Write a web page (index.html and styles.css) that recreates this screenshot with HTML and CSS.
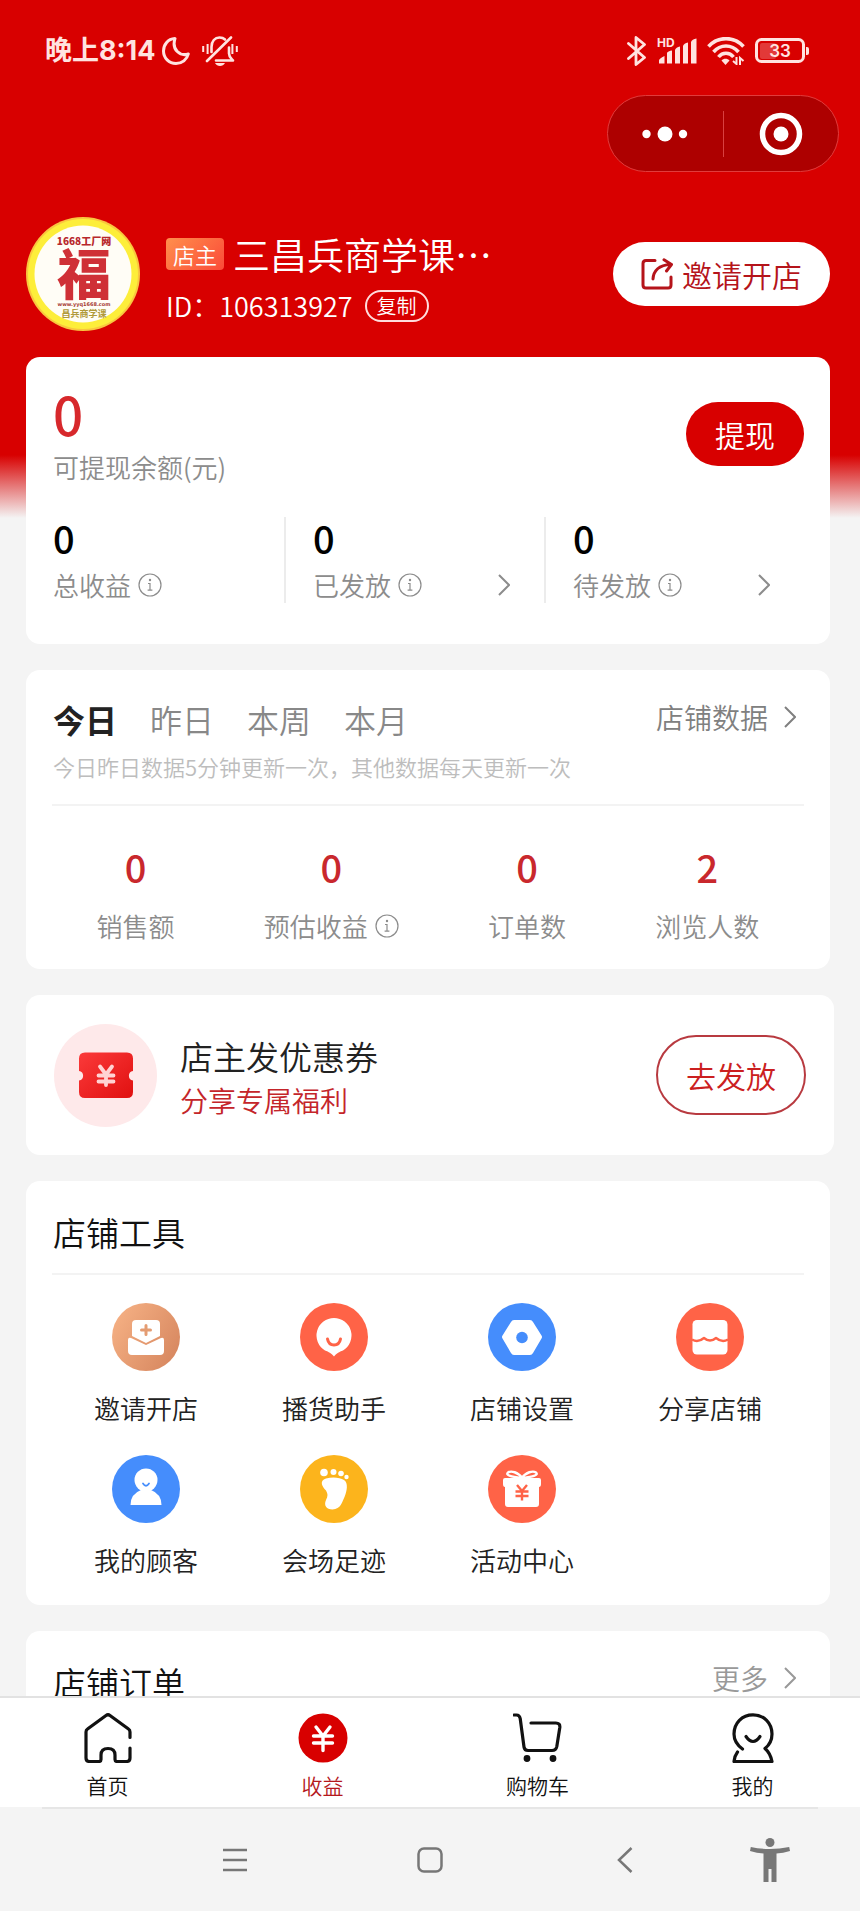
FILE: index.html
```
<!DOCTYPE html>
<html lang="zh-CN">
<head>
  <meta charset="UTF-8">
  <meta name="viewport" content="width=device-width, initial-scale=1.0">
  <title>收益</title>
  <link rel="stylesheet" href="styles.css">
</head>
<body>

  <!-- shared icons -->
  <svg class="sprite" aria-hidden="true">
    <symbol id="info" viewBox="0 0 24 24">
      <circle cx="12" cy="12" r="11" fill="none" stroke="currentColor" stroke-width="1.2"/>
      <circle cx="12" cy="7" r="1.2" fill="currentColor"/>
      <path d="M10 10.500h2v6.500M9.600 17.200h4.800" fill="none" stroke="currentColor" stroke-width="1.2"/>
    </symbol>
    <symbol id="arrow" viewBox="0 0 12 22">
      <path d="M1 1l10 10L1 21" fill="none" stroke="currentColor" stroke-width="2"/>
    </symbol>
  </svg>

  <div class="screen">
    <main class="content">

      <div class="statusbar">
        <span class="time">晚上8:14</span>
        <svg class="moon" width="28" height="28" viewBox="0 0 28 28"><path d="M13 1.6C5.500 2 1.500 8 1.500 14c0 7 5.500 12.500 12.500 12.500 6 0 11-4 12.300-9.500-8 2.500-17-4-13.300-15.400z" fill="none" stroke="currentColor" stroke-width="3" stroke-linejoin="round"/></svg>
        <svg class="bell" width="36" height="30" viewBox="0 0 36 30">
          <g fill="none" stroke="currentColor" stroke-width="2.600" stroke-linecap="round" stroke-linejoin="round">
            <path d="M5 25L29 1.500"/>
            <path d="M9.500 16v-5c0-6 3.500-9.500 8-9.500 2 0 4 .5 5.500 2"/>
            <path d="M14 24.500h17c-2.500-2.500-4-3.500-4-7v-6"/>
          </g>
          <path d="M13 27h10c-1 2-3 3-5 3s-4-1-5-3z" fill="currentColor"/>
          <path d="M1.200 10v6M5.600 8v10M30.400 8v10M34.800 10v6" stroke="currentColor" stroke-width="2"/>
        </svg>
        <div class="status-right">
          <svg width="20" height="30" viewBox="0 0 20 30"><path d="M1.500 7.500l16 14-8.500 7V1.500l8.500 7-16 14" fill="none" stroke="currentColor" stroke-width="2.800" stroke-linejoin="round" stroke-linecap="round"/></svg>
          <svg width="40" height="34" viewBox="0 -3 40 34">
            <text x="0" y="10" class="hd">HD</text>
            <path d="M2 26.500v-3q0-2 5.500-4.500v7.500zM10 26.500V16q1-2 5-2.500v13zM18 26.500V13q1-3 5-3.500v17zM26 26.500V9q1-3 5-3.500v21zM34 26.500V5q1-3 5.500-3.500v25z" fill="currentColor"/>
          </svg>
          <svg width="38" height="28" viewBox="0 0 38 28">
            <g fill="none" stroke="currentColor" stroke-width="3.600">
              <path d="M1.500 9.500C11-1 27-1 36.500 9.500"/>
              <path d="M6.500 15C13.500 7 24.500 7 31.500 15"/>
              <path d="M11.500 20c4-5 11-5 15 0"/>
            </g>
            <path d="M14.500 23.500c2-2.500 6-2.500 8 0L18.500 28z" fill="currentColor"/>
            <path d="M29.500 20v7l-3.500-3M33 28v-7l3.500 3" fill="none" stroke="currentColor" stroke-width="2"/>
          </svg>
          <svg width="55" height="26" viewBox="0 0 55 26">
            <rect x="5" y="5" width="16" height="16" rx="2" fill="currentColor" opacity=".25"/>
            <rect x="1.500" y="1.500" width="47" height="22" rx="5" fill="none" stroke="currentColor" stroke-width="3"/>
            <path d="M51 9h1q2 0 2 2v4q0 2-2 2h-1z" fill="currentColor"/>
            <text x="25" y="19" text-anchor="middle" class="battery">33</text>
          </svg>
        </div>
      </div>

      <div class="capsule">
        <button class="capsule-btn" aria-label="更多">
          <svg width="46" height="16" viewBox="0 0 46 16" fill="currentColor"><circle cx="4.500" cy="8" r="4.200"/><circle cx="23" cy="8" r="7.500"/><circle cx="41" cy="8" r="4.200"/></svg>
        </button>
        <button class="capsule-btn" aria-label="关闭">
          <svg width="44" height="44" viewBox="0 0 44 44"><circle cx="22" cy="22" r="18.500" fill="none" stroke="currentColor" stroke-width="5.500"/><circle cx="22" cy="22" r="7.500" fill="currentColor"/></svg>
        </button>
      </div>

      <header class="profile">
        <svg class="avatar" viewBox="0 0 114 114">
          <circle cx="57" cy="57" r="57" fill="#f9c63f"/>
          <circle cx="57" cy="57" r="55" fill="#fdee3a"/>
          <circle cx="57" cy="57" r="48.500" fill="#fffdf6"/>
          <text x="58" y="28" text-anchor="middle" class="logo-top">1668工厂网</text>
          <text x="58" y="78" text-anchor="middle" class="logo-fu">福</text>
          <text x="58" y="89" text-anchor="middle" class="logo-url">www.yyq1668.com</text>
          <text x="58" y="100" text-anchor="middle" class="logo-name">昌兵商学课</text>
        </svg>
        <div class="profile-info">
          <div class="name-row">
            <span class="badge">店主</span>
            <h1 class="name">三昌兵商学课⋯</h1>
          </div>
          <div class="id-row">
            <span>ID：106313927</span>
            <button class="copy">复制</button>
          </div>
        </div>
        <button class="invite">
          <svg width="32" height="32" viewBox="0 0 32 32" fill="none" stroke="currentColor" stroke-width="3" stroke-linecap="round" stroke-linejoin="round">
            <path d="M14 2.500H5Q2 2.500 2 5.500V27q0 3 3 3h22q3 0 3-3v-8"/>
            <path d="M12 21c.5-8 6-14 17.500-14.500M23 1.800l7.500 4.700-5 6.500"/>
          </svg>
          邀请开店
        </button>
      </header>

      <section class="card balance">
        <div class="balance-top">
          <div>
            <div class="amount">0</div>
            <div class="label">可提现余额(元)</div>
          </div>
          <button class="withdraw">提现</button>
        </div>
        <div class="income">
          <div class="income-item">
            <div class="num">0</div>
            <div class="label">总收益<svg class="info"><use href="#info"/></svg></div>
          </div>
          <div class="income-item">
            <div class="num">0</div>
            <div class="label">已发放<svg class="info"><use href="#info"/></svg><svg class="arrow"><use href="#arrow"/></svg></div>
          </div>
          <div class="income-item">
            <div class="num">0</div>
            <div class="label">待发放<svg class="info"><use href="#info"/></svg><svg class="arrow"><use href="#arrow"/></svg></div>
          </div>
        </div>
      </section>

      <section class="card">
        <div class="card-head">
          <div class="tabs">
            <button class="tab active">今日</button>
            <button class="tab">昨日</button>
            <button class="tab">本周</button>
            <button class="tab">本月</button>
          </div>
          <a class="more" href="#">店铺数据<svg class="arrow"><use href="#arrow"/></svg></a>
        </div>
        <p class="note">今日昨日数据5分钟更新一次，其他数据每天更新一次</p>
        <div class="stats">
          <div class="stat"><div class="num">0</div><div class="label">销售额</div></div>
          <div class="stat"><div class="num">0</div><div class="label">预估收益<svg class="info"><use href="#info"/></svg></div></div>
          <div class="stat"><div class="num">0</div><div class="label">订单数</div></div>
          <div class="stat"><div class="num">2</div><div class="label">浏览人数</div></div>
        </div>
      </section>

      <section class="card coupon">
        <svg class="coupon-icon" viewBox="0 0 103 103">
          <defs><linearGradient id="ticket" x1="0" y1="0" x2="1" y2="1"><stop offset="0" stop-color="#fb3a3a"/><stop offset="1" stop-color="#e01010"/></linearGradient></defs>
          <circle cx="51.500" cy="51.500" r="51.500" fill="#fee9ea"/>
          <path d="M31 28.500h42q6 0 6 6V47a4.800 4.800 0 0 0 0 9.500V68q0 6-6 6H31q-6 0-6-6V56.500a4.800 4.800 0 0 0 0-9.500V34.500q0-6 6-6z" fill="url(#ticket)"/>
          <path d="M46 42.500l6 8 6-8M44.500 51.500h15M44.500 57.500h15M52 50.500V61" fill="none" stroke="#ffd3d3" stroke-width="3.800" stroke-linecap="round"/>
        </svg>
        <div class="coupon-text">
          <h2 class="title">店主发优惠券</h2>
          <p class="coupon-sub">分享专属福利</p>
        </div>
        <button class="send">去发放</button>
      </section>

      <section class="card">
        <div class="card-head tools-head">
          <h2 class="title">店铺工具</h2>
        </div>
        <div class="tools">
          <a class="tool" href="#">
            <svg viewBox="0 0 68 68">
              <defs><linearGradient id="tan" x1="0" y1="0" x2="1" y2="0.600"><stop offset="0" stop-color="#f8b487"/><stop offset="1" stop-color="#d98a62"/></linearGradient></defs>
              <circle cx="34" cy="34" r="34" fill="url(#tan)"/>
              <path d="M24 17h20q4 0 4 4v12l-14 7-14-7V21q0-4 4-4z" fill="#fff"/>
              <path d="M16 37q0-3 3-2l15 7 15-7q3-1 3 2v11q0 4-4 4H20q-4 0-4-4z" fill="#fff"/>
              <path d="M34 22.500v9M29.500 27h9" stroke="#e49c72" stroke-width="3" stroke-linecap="round"/>
            </svg>
            邀请开店
          </a>
          <a class="tool" href="#">
            <svg viewBox="0 0 68 68">
              <circle cx="34" cy="34" r="34" fill="#ff6347"/>
              <path d="M34 15a17.500 17.500 0 0 1 9 32.500c-4 1.500-6 2.500-9 6-3-3.500-5-4.500-9-6A17.500 17.500 0 0 1 34 15z" fill="#fff"/>
              <path d="M27.500 36c1.500 8 11.500 8 13 0" fill="none" stroke="#ff6347" stroke-width="3" stroke-linecap="round"/>
            </svg>
            播货助手
          </a>
          <a class="tool" href="#">
            <svg viewBox="0 0 68 68">
              <circle cx="34" cy="34" r="34" fill="#458dfc"/>
              <path d="M26 17h16q2 0 3 2l8.500 13.500q1 1.500 0 3L45 50q-1 2-3 2H26q-2 0-3-2l-8.500-14.500q-1-1.500 0-3L23 19q1-2 3-2z" fill="#fff"/>
              <circle cx="34" cy="34.500" r="5.800" fill="#458dfc"/>
            </svg>
            店铺设置
          </a>
          <a class="tool" href="#">
            <svg viewBox="0 0 68 68">
              <circle cx="34" cy="34" r="34" fill="#ff6347"/>
              <rect x="16.500" y="17" width="35" height="34.500" rx="4.500" fill="#fff"/>
              <path d="M16 36.500q6 3.500 12-1.500 6 5 12 0 6 5 12 1.500" fill="none" stroke="#ff6347" stroke-width="2.400" stroke-linejoin="round"/>
            </svg>
            分享店铺
          </a>
          <a class="tool" href="#">
            <svg viewBox="0 0 68 68">
              <circle cx="34" cy="34" r="34" fill="#458dfc"/>
              <circle cx="34" cy="25" r="11.500" fill="#fff"/>
              <path d="M18.500 50q0-11 10.500-15h10q10.500 4 10.500 15-15.500 0-31 0z" fill="#fff"/>
              <path d="M31 28.500q3 4.500 6 0" fill="none" stroke="#458dfc" stroke-width="1.800" stroke-linecap="round"/>
            </svg>
            我的顾客
          </a>
          <a class="tool" href="#">
            <svg viewBox="0 0 68 68">
              <circle cx="34" cy="34" r="34" fill="#fcb41c"/>
              <g fill="#fff">
                <circle cx="24" cy="17.500" r="3.800"/><circle cx="33.500" cy="17" r="3"/><circle cx="41" cy="18.500" r="2.800"/><circle cx="46.500" cy="22" r="2.200"/>
                <path d="M26 23.500c7-2 14-1 18 1.500 4.500 3 3 11 .5 17-2.500 5-3.500 12-12 12.500-6 0-9-4-6.500-9.500 2-4 2-6 0-9.500-4-4-7-9.500 0-12z"/>
              </g>
            </svg>
            会场足迹
          </a>
          <a class="tool" href="#">
            <svg viewBox="0 0 68 68">
              <circle cx="34" cy="34" r="34" fill="#ff6347"/>
              <path d="M34 23c-4-6-11-7.500-14-5.500-3 3 4 4 14 5.500zM34 23c4-6 11-7.500 14-5.500 3 3-4 4-14 5.500z" fill="none" stroke="#fff" stroke-width="2.400"/>
              <path d="M17 23h34q2 0 2 2v4q0 3-2 3v17q0 3-3 3H20q-3 0-3-3V32q-2 0-2-3v-4q0-2 2-2z" fill="#fff"/>
              <path d="M29 30l5 6 5-6M27.500 36.500h13M27.500 41h13M34 36v9.500" fill="none" stroke="#ff6347" stroke-width="2.400"/>
            </svg>
            活动中心
          </a>
        </div>
      </section>

      <section class="card">
        <div class="card-head">
          <h2 class="title">店铺订单</h2>
          <a class="more light" href="#">更多<svg class="arrow"><use href="#arrow"/></svg></a>
        </div>
      </section>
    </main>

    <nav class="tabbar">
      <a class="tabbar-item" href="#">
        <svg viewBox="0 0 50 50" fill="none" stroke="currentColor" stroke-width="3.200" stroke-linecap="round" stroke-linejoin="round">
          <path d="M47 24.500V19q0-2-1.500-3L27 2.500q-2-1.500-4 0L4.500 16Q3 17 3 19v26q0 3.500 3.500 3.500H16q2 0 2-2V42q0-6.500 7-6.500t7 6.500v4.500q0 2 2 2h9.500q3.500 0 3.500-3.500V35"/>
        </svg>
        首页
      </a>
      <a class="tabbar-item current" href="#">
        <svg viewBox="0 0 50 50">
          <circle cx="25" cy="25" r="24.500" fill="#d80000"/>
          <path d="M18 14l7 9 7-9M15.500 23h19M15.500 30h19M25 23v14.500" fill="none" stroke="#fff" stroke-width="3.400" stroke-linecap="round"/>
        </svg>
        收益
      </a>
      <a class="tabbar-item" href="#">
        <svg viewBox="0 0 50 50" fill="none" stroke="currentColor" stroke-width="3.200" stroke-linecap="round" stroke-linejoin="round">
          <path d="M1 2h2.500q3 0 3.700 3.500L11 34q.5 3.500 4 3.500h24q4 0 4.800-4l3-19q.5-4.500-4-4.500H18"/>
          <circle cx="14" cy="45.500" r="1.800" fill="currentColor"/><circle cx="40" cy="45.500" r="1.800" fill="currentColor"/>
        </svg>
        购物车
      </a>
      <a class="tabbar-item" href="#">
        <svg viewBox="0 0 50 50" fill="none" stroke="currentColor" stroke-width="3.200" stroke-linecap="round" stroke-linejoin="round">
          <path d="M14.500 36C9 32 6 27 6 21 6 10 14 1.800 25 1.800S44 10 44 21c0 6-2 10.500-7 14.500 3.500 3 6 8 7 13H6q.5-5.500 3.500-9.500"/>
          <path d="M18 23.500q7 10 14 0"/>
        </svg>
        我的
      </a>
    </nav>

    <div class="sysnav">
      <div class="sysnav-main">
        <button class="sys-btn" aria-label="最近任务"><svg width="26" height="26" viewBox="0 0 26 26"><path d="M1 3h24M1 13h24M1 23h24" stroke="currentColor" stroke-width="2.500"/></svg></button>
        <button class="sys-btn" aria-label="主屏幕"><svg width="26" height="26" viewBox="0 0 26 26"><rect x="1.500" y="1.500" width="23" height="23" rx="5.500" fill="none" stroke="currentColor" stroke-width="2.500"/></svg></button>
        <button class="sys-btn" aria-label="返回"><svg width="16" height="26" viewBox="0 0 16 26"><path d="M14.500 1L2 13l12.500 12" fill="none" stroke="currentColor" stroke-width="2.500"/></svg></button>
      </div>
      <button class="sys-btn access" aria-label="无障碍">
        <svg width="40" height="44" viewBox="0 0 40 44" fill="currentColor"><circle cx="20" cy="4.500" r="4.500"/><path d="M.8 9q19 4 38.400 0l.8 4q-7 2-13.500 2.500V44h-5V31h-3v13h-5V15.500Q7 15 0 13z"/></svg>
      </button>
    </div>
  </div>

</body>
</html>
```
FILE: styles.css
```
*{
  box-sizing: border-box;
}
body{
  margin: 0;
  font-family: "Noto Sans CJK SC", sans-serif;
  font-weight: 350;
  color: #222;
  background-color: #f4f4f4;
}
h1,h2,p{
  margin: 0;
  font-weight: inherit;
}
button{
  font: inherit;
  color: inherit;
  background: none;
  border: 0;
  padding: 0;
  cursor: pointer;
}
a{
  color: inherit;
  text-decoration: none;
}
svg{
  display: block;
  flex: none;
}
.sprite{
  position: absolute;
  width: 0;
  height: 0;
}
.screen{
  display: flex;
  flex-direction: column;
  height: 100vh;
}
.content{
  flex: 1;
  min-height: 0;
  overflow: hidden;
  background: linear-gradient(#d80000 455px, #f4f4f4 518px);
}

/* status bar */
.statusbar{
  display: flex;
  align-items: center;
  padding: 31px 50px 24px 45px;
  line-height: 40px;
  color: #ffe3e0;
}
.time{
  font-family: Inter, "Noto Sans CJK SC", sans-serif;
  font-size: 27px;
  font-weight: 700;
}
.moon{
  margin-left: 6px;
}
.bell{
  margin-left: 12px;
}
.status-right{
  display: flex;
  align-items: center;
  gap: 10px;
  margin-left: auto;
}
.hd{
  font: 700 12px Inter, sans-serif;
  fill: currentColor;
}
.battery{
  font: 600 17px Inter, sans-serif;
  fill: currentColor;
}

/* mini program capsule */
.capsule{
  display: flex;
  align-items: center;
  width: 232px;
  height: 77px;
  margin-left: auto;
  margin-right: 21px;
  border: 1px solid #e03c3c;
  border-radius: 39px;
  background-color: #ad0000;
  color: #fff;
}
.capsule-btn{
  display: flex;
  flex: 1;
  justify-content: center;
  align-items: center;
  height: 46px;
}
.capsule-btn + .capsule-btn{
  border-left: 1px solid #d84040;
}

/* profile */
.profile{
  display: flex;
  align-items: center;
  margin: 45px 30px 26px 26px;
  color: #fff;
}
.avatar{
  width: 114px;
  height: 114px;
}
.logo-top{
  font: 900 10px "Noto Sans CJK SC", sans-serif;
  fill: #b8282c;
}
.logo-fu{
  font: 900 54px "Noto Sans CJK SC", sans-serif;
  fill: #cf3036;
}
.logo-url{
  font: 700 5px "DejaVu Sans", sans-serif;
  fill: #a63a34;
}
.logo-name{
  font: 700 9px "Noto Sans CJK SC", sans-serif;
  fill: #b09a3a;
}
.profile-info{
  flex: 1;
  margin-left: 26px;
  padding-top: 3px;
}
.name-row,
.id-row{
  display: flex;
  align-items: center;
}
.badge{
  padding: 0 7px;
  border-radius: 4px;
  background: linear-gradient(135deg, #ff8f4c, #fb4a38);
  font-size: 22px;
  line-height: 32px;
}
.name{
  margin-left: 9px;
  font-size: 37px;
  line-height: 60px;
  white-space: nowrap;
}
.id-row{
  font-size: 27px;
  line-height: 44px;
}
.copy{
  margin-left: 12px;
  padding: 0 10px;
  border: 2px solid #ffdcdc;
  border-radius: 16px;
  font-size: 20px;
  line-height: 28px;
}
.invite{
  display: flex;
  align-items: center;
  gap: 9px;
  padding: 0 28px;
  border-radius: 32px;
  background-color: #fff;
  color: #b5141a;
  font-size: 30px;
  line-height: 64px;
}

/* cards */
.card{
  margin: 0 30px 26px 26px;
  padding: 28px 26px 24px;
  border-radius: 14px;
  background-color: #fff;
}
.card-head{
  display: flex;
  justify-content: space-between;
  align-items: flex-start;
  padding: 0 8px 0 1px;
}
.title{
  font-size: 33px;
  line-height: 46px;
  color: #111;
}
.label{
  display: flex;
  align-items: center;
  font-size: 26px;
  line-height: 36px;
  color: #8c8c8c;
}
.num{
  font-size: 38px;
  font-weight: 500;
  line-height: 42px;
}
.info{
  width: 24px;
  height: 24px;
  margin-left: 7px;
}
.arrow{
  width: 12px;
  height: 22px;
}
.more{
  display: flex;
  align-items: center;
  gap: 16px;
  font-size: 28px;
  line-height: 38px;
  color: #808080;
}
.more.light{
  color: #999;
}

/* balance */
.balance{
  padding-bottom: 41px;
}
.balance-top{
  display: flex;
  justify-content: space-between;
  align-items: flex-start;
  margin-bottom: 32px;
  padding-left: 1px;
}
.amount{
  margin-bottom: 8px;
  font-size: 53px;
  font-weight: 500;
  line-height: 56px;
  color: #d7282c;
}
.withdraw{
  margin-top: 17px;
  padding: 0 29px;
  border-radius: 32px;
  background-color: #d80000;
  color: #fff;
  font-size: 30px;
  line-height: 64px;
}
.income{
  display: grid;
  grid-template-columns: 232fr 260fr 260fr;
}
.income-item{
  padding-left: 27px;
  border-left: 2px solid #ececec;
}
.income-item:first-child{
  padding-left: 1px;
  border-left: 0;
}
.income-item .num{
  margin-bottom: 8px;
  color: #000;
}
.income-item .arrow{
  margin-left: auto;
  margin-right: 34px;
}

/* shop data */
.tabs{
  display: flex;
  gap: 33px;
}
.tab{
  font-size: 32px;
  line-height: 42px;
  color: #888;
}
.tab.active{
  font-weight: 700;
  color: #222;
}
.note{
  margin-top: 10px;
  padding: 0 1px 22px;
  border-bottom: 2px solid #f3f3f3;
  font-size: 22px;
  line-height: 32px;
  color: #bdbdbd;
}
.stats{
  display: flex;
  justify-content: space-around;
  padding: 40px 0 1px;
}
.stat{
  text-align: center;
}
.stat .num{
  margin-bottom: 20px;
  color: #c9282d;
}

/* coupon */
.coupon{
  display: flex;
  align-items: center;
  min-height: 160px;
  margin-right: 26px;
  padding: 0 28px;
}
.coupon-icon{
  width: 103px;
  height: 103px;
}
.coupon-text{
  flex: 1;
  margin-left: 23px;
  padding-top: 4px;
}
.coupon .title{
  color: #222;
}
.coupon-sub{
  font-size: 28px;
  line-height: 42px;
  color: #c4252a;
}
.send{
  padding: 0 28px;
  border: 2px solid #b83a40;
  border-radius: 40px;
  color: #cb2020;
  font-size: 30px;
  line-height: 76px;
}

/* tools */
.tools-head{
  padding-bottom: 18px;
  border-bottom: 2px solid #f3f3f3;
}
.tools{
  display: grid;
  grid-template-columns: repeat(4, 1fr);
  row-gap: 29px;
  padding: 28px 0 3px;
}
.tool{
  display: flex;
  flex-direction: column;
  align-items: center;
  gap: 19px;
  font-size: 26px;
  line-height: 36px;
}
.tool svg{
  width: 68px;
  height: 68px;
}

/* bottom tabs */
.tabbar{
  display: grid;
  grid-template-columns: repeat(4, 1fr);
  padding: 15px 0 7px;
  border-top: 2px solid #e2e2e2;
  background-color: #fff;
}
.tabbar-item{
  display: flex;
  flex-direction: column;
  align-items: center;
  gap: 7px;
  font-size: 21px;
  line-height: 30px;
  color: #111;
}
.tabbar-item.current{
  color: #b5181c;
}
.tabbar-item svg{
  width: 50px;
  height: 50px;
}

/* android navigation */
.sysnav{
  display: grid;
  grid-template-columns: 1fr auto 1fr;
  align-items: center;
  height: 104px;
  margin: 0 42px;
  border-top: 2px solid #e6e6e6;
  color: #777;
}
.sysnav-main{
  grid-column: 2;
  display: flex;
  gap: 135px;
}
.sys-btn{
  display: flex;
  justify-content: center;
  align-items: center;
  width: 60px;
  height: 60px;
}
.access{
  justify-self: end;
  margin-right: 18px;
}
```
